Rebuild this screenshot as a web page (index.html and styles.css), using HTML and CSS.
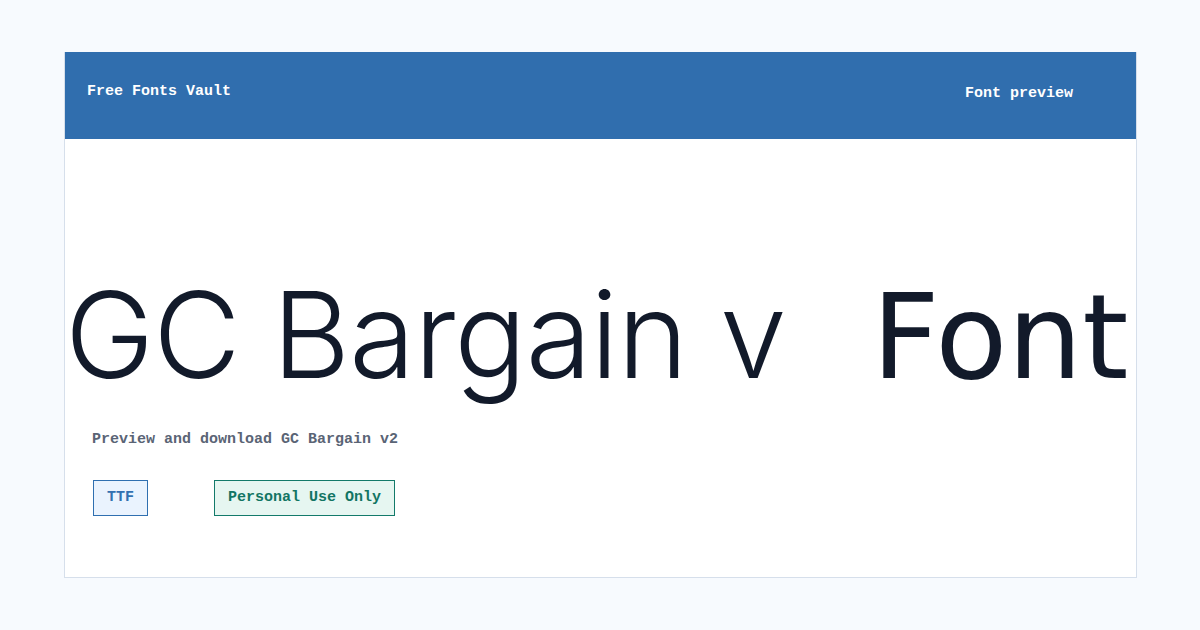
FILE: index.html
```html
<!DOCTYPE html>
<html lang="en">
<head>
    <meta charset="UTF-8">
    <meta name="viewport" content="width=device-width, initial-scale=1.0">
    <title>GC Bargain v2 Font - Free Fonts Vault</title>
    <link rel="stylesheet" href="styles.css">
</head>
<body>

<div class="card">
    <header class="top-bar">
        <div class="brand">Free Fonts Vault</div>
        <nav class="top-nav">Font preview</nav>
    </header>

    <main class="preview">
        <h1 class="font-name"><span class="face">GC Bargain v</span><span class="missing-glyph"></span>Font</h1>
        <p class="lead">Preview and download GC Bargain v2</p>

        <div class="tags">
            <span class="tag tag-format">TTF</span>
            <span class="tag tag-license">Personal Use Only</span>
        </div>
    </main>
</div>

</body>
</html>
```

FILE: styles.css
```css
body {
    font-family: 'Liberation Mono', monospace;
    background-color: #f7fafe;
    margin: 0;
    padding: 52px 63px 52px 64px;
}

.card {
    background-color: #fff;
    border: 1px solid #d6dfeb;
    border-top: none;
    height: 526px;
    box-sizing: border-box;
}

.top-bar {
    background-color: #306eae;
    color: white;
    height: 87px;
    display: flex;
    justify-content: space-between;
    align-items: center;
    padding: 0 63px 0 22px;
    font-size: 15px;
    font-weight: bold;
}

.brand {
    margin-top: -9px;
}

.top-nav {
    margin-top: -5px;
}

.preview {
    padding: 136px 27px 0;
}

.font-name {
    margin: 0 -11px 0 -27px;
    font-family: 'DejaVu Sans', sans-serif;
    font-weight: normal;
    font-size: 118px;
    line-height: 120px;
    color: #121a2a;
    text-align: center;
    white-space: nowrap;
}

.face {
    font-family: Inter, sans-serif;
    font-weight: 300;
    font-size: 120px;
    letter-spacing: -1px;
}

.missing-glyph {
    display: inline-block;
    width: 86px;
}

.lead {
    margin: 34px 0 0;
    font-size: 15px;
    font-weight: bold;
    color: #5a6475;
}

.tags {
    display: flex;
    gap: 66px;
    margin-top: 32px;
    padding-left: 1px;
}

.tag {
    font-size: 15px;
    font-weight: bold;
    line-height: 18px;
    padding: 8px 13px;
    border: 1px solid;
}

.tag-format {
    background-color: #eaf3fe;
    border-color: #2f6fb0;
    color: #3270b0;
}

.tag-license {
    background-color: #e6f6f1;
    border-color: #137a6a;
    color: #127563;
}
```
